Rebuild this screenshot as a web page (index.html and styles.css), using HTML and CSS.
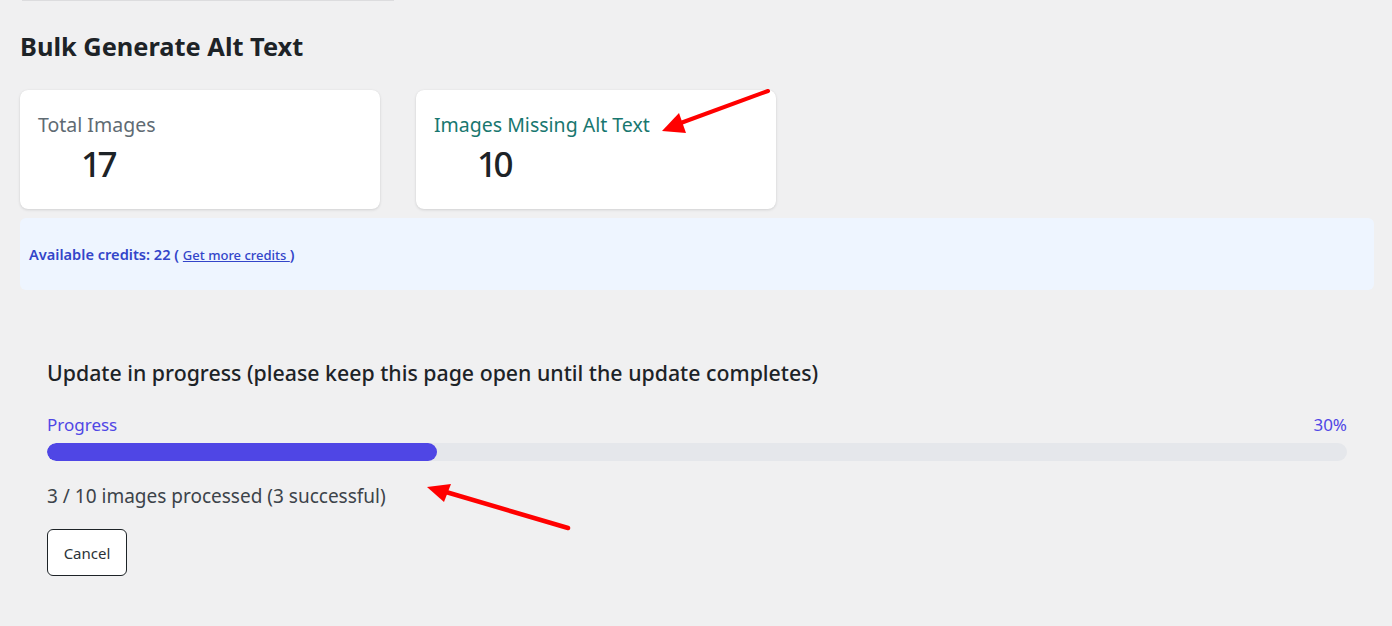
FILE: index.html
```html
<!DOCTYPE html>
<html lang="en">
<head>
<meta charset="utf-8">
<title>Bulk Generate Alt Text</title>
<link rel="stylesheet" href="styles.css">
</head>
<body>
<div class="page">
  <div class="top-rule"></div>
  <h1 class="title">Bulk Generate Alt Text</h1>

  <div class="stats">
    <div class="card">
      <div class="card-label">Total Images</div>
      <div class="card-value">17</div>
    </div>
    <div class="card">
      <div class="card-label label-missing">Images Missing Alt Text</div>
      <div class="card-value">10</div>
    </div>
  </div>

  <div class="credits">
    <span class="credits-text">Available credits: 22 ( <a href="#" class="credits-link">Get more credits </a>)</span>
  </div>

  <div class="progress-section">
    <h2 class="progress-title">Update in progress (please keep this page open until the update completes)</h2>
    <div class="progress-head">
      <span>Progress</span>
      <span>30%</span>
    </div>
    <div class="track"><div class="fill" style="width:30%"></div></div>
    <p class="processed">3 / 10 images processed (3 successful)</p>
    <button class="cancel" type="button">Cancel</button>
  </div>

  <svg class="arrows" width="1392" height="626" viewBox="0 0 1392 626">
    <line x1="768" y1="91" x2="678" y2="124" stroke="#ff0000" stroke-width="4" stroke-linecap="round"/>
    <polygon points="662,131 679,113 686,133" fill="#ff0000"/>
    <line x1="568" y1="528" x2="446" y2="492" stroke="#ff0000" stroke-width="4.5" stroke-linecap="round"/>
    <polygon points="427,487 451,484 444,502" fill="#ff0000"/>
  </svg>
</div>
</body>
</html>
```

FILE: styles.css
```css
* { box-sizing: border-box; }
html, body { margin: 0; padding: 0; }
body {
  background: #f0f0f1;
  font-family: "Noto Sans", "Open Sans", sans-serif;
  color: #1d2327;
  width: 1392px;
  height: 626px;
  overflow: hidden;
}
.page {
  position: relative;
  padding: 0 18px 0 20px;
  height: 626px;
}
.top-rule {
  margin-left: 2px;
  width: 372px;
  height: 1px;
  background: #dcdcde;
}
.title {
  margin: 0;
  padding-top: 29px;
  font-size: 25.4px;
  font-weight: 700;
  line-height: 32px;
  color: #1d2327;
}
.stats {
  display: flex;
  gap: 36px;
  margin-top: 28px;
}
.card {
  width: 360px;
  height: 119px;
  background: #fff;
  border-radius: 8px;
  box-shadow: 0 1px 3px rgba(0,0,0,0.12), 0 0 1px rgba(0,0,0,0.08);
  padding: 22px 18px 0 18px;
}
.card-label {
  font-size: 19.5px;
  line-height: 26px;
  color: #5f6b73;
}
.label-missing { color: #18776f; }
.card-value {
  font-size: 35px;
  line-height: 40px;
  font-weight: 500;
  color: #1d2327;
  margin-top: 6px;
  margin-left: 43px;
  letter-spacing: -3.5px;
}
.credits {
  margin-top: 9px;
  height: 72px;
  background: #eef5ff;
  border-radius: 6px;
  display: flex;
  align-items: center;
  padding: 0 9px;
}
.credits-text {
  font-size: 14.6px;
  font-weight: 600;
  color: #3345c9;
}
.credits-link {
  color: #3345c9;
  font-size: 13px;
  font-weight: 500;
}
.progress-section {
  padding: 69px 27px 0 27px;
}
.progress-title {
  margin: 0;
  font-size: 21.3px;
  font-weight: 500;
  line-height: 28px;
  color: #1d2327;
}
.progress-head {
  display: flex;
  justify-content: space-between;
  margin-top: 27px;
  font-size: 17px;
  line-height: 22px;
  color: #4f46e5;
}
.track {
  margin-top: 7px;
  height: 18px;
  background: #e5e7eb;
  border-radius: 9px;
  overflow: hidden;
}
.fill {
  height: 100%;
  background: #4f46e5;
  border-radius: 9px;
}
.processed {
  margin: 22px 0 0 0;
  font-size: 19px;
  line-height: 26px;
  color: #3c434a;
}
.cancel {
  display: block;
  margin-top: 20px;
  width: 80px;
  height: 47px;
  background: #fff;
  border: 1px solid #1d2327;
  border-radius: 6px;
  font-family: "Noto Sans", "Open Sans", sans-serif;
  font-size: 15px;
  font-weight: 400;
  color: #2c3338;
  padding: 0;
}
.arrows {
  position: absolute;
  top: 0;
  left: 0;
  pointer-events: none;
}
```
